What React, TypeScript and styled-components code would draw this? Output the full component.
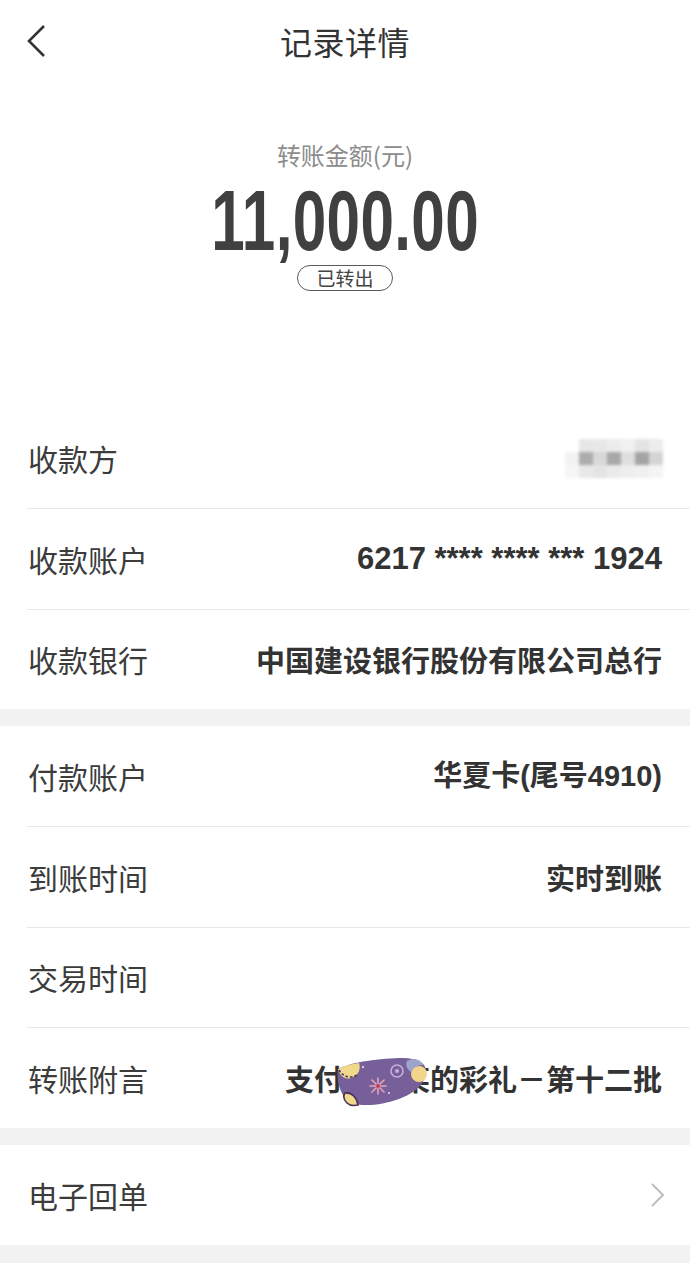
import React from 'react'
import styled, { createGlobalStyle } from 'styled-components'

const GlobalStyle = createGlobalStyle`
  html, body {
    margin: 0;
    padding: 0;
    background: #f2f2f2;
  }
  body {
    font-family: "Noto Sans CJK SC", "Noto Sans", sans-serif;
    color: #333;
  }
`

const Page = styled.div`
  width: 690px;
  min-height: 1263px;
  background: #f2f2f2;
`

const Header = styled.div`
  height: 86px;
  padding-bottom: 4px;
  box-sizing: border-box;
  display: grid;
  grid-template-columns: 1fr auto 1fr;
  align-items: center;
  background: #fff;
`

const BackButton = styled.div`
  display: flex;
  align-items: center;
  padding-left: 26px;
  height: 100%;
`

const Title = styled.h1`
  margin: 0;
  font-size: 32px;
  font-weight: 400;
  color: #333;
  letter-spacing: 0.5px;
`

const Summary = styled.div`
  height: 322px;
  display: flex;
  flex-direction: column;
  align-items: center;
  padding-top: 52px;
  box-sizing: border-box;
  background: #fff;
`

const AmountLabel = styled.div`
  font-size: 24px;
  line-height: 34px;
  color: #8c8c8c;
`

const Amount = styled.div`
  margin-top: 13px;
  font-family: "Liberation Sans", Arial, sans-serif;
  font-weight: 700;
  font-size: 86px;
  line-height: 70px;
  color: #404040;
  transform: scaleX(0.7);
  letter-spacing: 0.5px;
`

const Badge = styled.div`
  margin-top: 10px;
  width: 96px;
  height: 26px;
  box-sizing: border-box;
  border: 1.5px solid #5a5a5a;
  border-radius: 13px;
  display: flex;
  align-items: center;
  justify-content: center;
  font-size: 19px;
  line-height: 24px;
  color: #444;
`

const Section = styled.div`
  background: #fff;
  & + & {
    margin-top: 17px;
  }
`

const Row = styled.div`
  height: 100px;
  margin-left: 27px;
  padding: 0 28px 0 1px;
  display: flex;
  align-items: center;
  justify-content: space-between;
  & + & {
    height: 99.5px;
    border-top: 1px solid #e8e8e8;
  }
`

const Label = styled.div`
  font-size: 30px;
  color: #3c3c3c;
  white-space: nowrap;
`

const Value = styled.div<{ $size?: number }>`
  font-family: "Liberation Sans", "Noto Sans CJK SC", sans-serif;
  font-size: ${(p) => p.$size ?? 29}px;
  line-height: 40px;
  font-weight: 700;
  color: #333;
  white-space: nowrap;
  display: flex;
  align-items: center;
`

const CjkValue = styled(Value)`
  font-family: "Noto Sans CJK SC", sans-serif;
`

const Mosaic = styled.div`
  display: grid;
  grid-template-columns: repeat(7, 14px);
  grid-template-rows: repeat(3, 13px);
  filter: blur(1.5px);
  margin-right: -1px;
`

const Cell = styled.div<{ $shade: string }>`
  background: ${(p) => p.$shade};
`

const Note = styled.span`
  position: relative;
  display: inline-flex;
  align-items: center;
`

const Sticker = styled.svg`
  position: absolute;
  left: 52px;
  top: -1px;
`

const mosaicShades = [
  '#ffffff', '#e6e6e6', '#e8e8e8', '#ececec', '#f0f0f0', '#e4e4e4', '#ececec',
  '#f2f2f2', '#acacac', '#d8d8d8', '#a8a8a8', '#dedede', '#a4a4a4', '#d4d4d4',
  '#f6f6f6', '#e8e8e8', '#e4e4e4', '#eaeaea', '#eeeeee', '#f0f0f0', '#f4f4f4',
]

const App: React.FC = () => (
  <Page>
    <GlobalStyle />
    <Header>
      <BackButton>
        <svg width="22" height="34" viewBox="0 0 22 34">
          <polyline points="18,2 3,17 18,32" fill="none" stroke="#333" strokeWidth="2.6" />
        </svg>
      </BackButton>
      <Title>记录详情</Title>
      <div />
    </Header>

    <Summary>
      <AmountLabel>转账金额(元)</AmountLabel>
      <Amount>11,000.00</Amount>
      <Badge>已转出</Badge>
    </Summary>

    <Section>
      <Row>
        <Label>收款方</Label>
        <Mosaic>
          {mosaicShades.map((s, i) => (
            <Cell key={i} $shade={s} />
          ))}
        </Mosaic>
      </Row>
      <Row>
        <Label>收款账户</Label>
        <Value $size={31}>6217 **** **** *** 1924</Value>
      </Row>
      <Row>
        <Label>收款银行</Label>
        <CjkValue>中国建设银行股份有限公司总行</CjkValue>
      </Row>
    </Section>

    <Section>
      <Row>
        <Label>付款账户</Label>
        <Value>华夏卡(尾号4910)</Value>
      </Row>
      <Row>
        <Label>到账时间</Label>
        <CjkValue>实时到账</CjkValue>
      </Row>
      <Row>
        <Label>交易时间</Label>
        <CjkValue />
      </Row>
      <Row>
        <Label>转账附言</Label>
        <CjkValue>
          <Note>
            支付某某某的彩礼－第十二批
            <Sticker width="90" height="50" viewBox="0 0 90 50">
              <path d="M1 12 C14 5 44 1 66 1 C80 1 89 6 89 14 C89 26 78 36 62 42 C46 48 26 50 14 46 C5 42 -1 26 1 12 Z" fill="#77609a" />
              <path d="M1 12 C6 9 14 7 22 6 C24 12 22 18 14 21 C8 23 3 19 1 12 Z" fill="#f0d98a" />
              <path d="M2 13 C6 20 14 22 20 18" fill="none" stroke="#4e3464" strokeWidth="1.6" strokeDasharray="2.5 2" />
              <circle cx="60" cy="14" r="6" fill="none" stroke="#c4b0da" strokeWidth="1.6" />
              <circle cx="60" cy="14" r="2" fill="#c4b0da" />
              <circle cx="82" cy="17" r="8" fill="#f2d58a" />
              <path d="M70 4 C76 0 84 2 86 8 C80 8 76 11 74 15 C70 12 68 8 70 4 Z" fill="#9ea4cc" />
              <g stroke="#e9a3b6" strokeWidth="1.6" strokeLinecap="round">
                <line x1="41" y1="21" x2="41" y2="37" />
                <line x1="33" y1="29" x2="49" y2="29" />
                <line x1="35" y1="23" x2="47" y2="35" />
                <line x1="47" y1="23" x2="35" y2="35" />
              </g>
              <circle cx="41" cy="29" r="2" fill="#b2405c" />
              <path d="M8 36 C15 35 20 41 21 48 C16 49 12 48 10 46 C7 43 6 39 8 36 Z" fill="#f0d98a" stroke="#4a2e5a" strokeWidth="1.6" />
              <circle cx="52" cy="36" r="1" fill="#e8dff2" />
              <circle cx="26" cy="10" r="1.2" fill="#d9c9ea" />
            </Sticker>
          </Note>
        </CjkValue>
      </Row>
    </Section>

    <Section>
      <Row>
        <Label>电子回单</Label>
        <svg width="16" height="26" viewBox="0 0 16 26" style={{ marginRight: '-4px' }}>
          <polyline points="2,2 13,13 2,24" fill="none" stroke="#bdbdbd" strokeWidth="2" />
        </svg>
      </Row>
    </Section>
  </Page>
)

export default App
